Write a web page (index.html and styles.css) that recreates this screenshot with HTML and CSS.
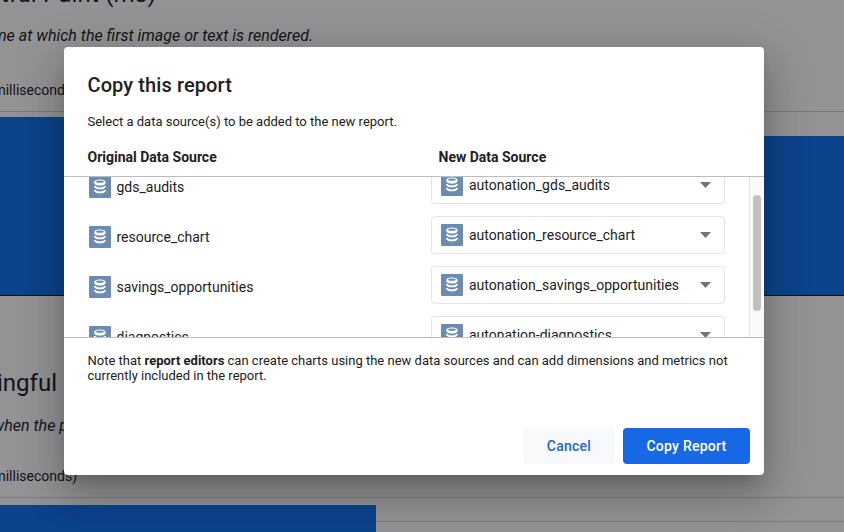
FILE: index.html
```html
<!DOCTYPE html>
<html lang="en">
<head>
<meta charset="utf-8">
<title>Copy this report</title>
<link rel="stylesheet" href="styles.css">
</head>
<body>
<svg class="defs" width="0" height="0" aria-hidden="true">
  <symbol id="db" viewBox="0 0 22 22">
    <rect width="22" height="22" rx="1" fill="#6b8bb1"/>
    <path d="M5.2 6c0-3.4 11.4-3.4 11.4 0v.8c0 3.8-11.4 3.8-11.4 0z" fill="#fff"/>
    <ellipse cx="10.9" cy="5.7" rx="3.9" ry="1.1" fill="#6b8bb1"/>
    <path d="M5.7 10c.8 3.2 9.6 3.2 10.4 0M5.7 14c.8 3.2 9.6 3.2 10.4 0" fill="none" stroke="#fff" stroke-width="1.9"/>
  </symbol>
</svg>
<main class="report">
  <section class="chart chart-first">
    <h2 class="chart-title"><span>First Contentful Paint (ms)</span></h2>
    <p class="chart-note"><span>The time at which the first image or text is rendered.</span></p>
    <div class="legend"><span>(milliseconds)</span></div>
    <div class="plot"><div class="bar bar-a"></div><div class="bar bar-b"></div></div>
  </section>
  <section class="chart chart-second">
    <h2 class="chart-title"><span>First Meaningful</span></h2>
    <p class="chart-note"><span>when the p</span></p>
    <div class="legend"><span>(milliseconds)</span></div>
    <div class="plot"><div class="bar bar-c"></div><div class="rest"></div></div>
  </section>
</main>
<div class="dialog" role="dialog">
  <h1>Copy this report</h1>
  <p class="intro">Select a data source(s) to be added to the new report.</p>
  <div class="heads"><div>Original Data Source</div><div>New Data Source</div></div>
  <div class="viewport">
    <div class="rows">
      <div class="row"><div class="source"><svg><use href="#db"/></svg><span>gds_audits</span></div><div class="select"><svg><use href="#db"/></svg><span>autonation_gds_audits</span><i class="caret"></i></div></div>
      <div class="row"><div class="source"><svg><use href="#db"/></svg><span>resource_chart</span></div><div class="select"><svg><use href="#db"/></svg><span>autonation_resource_chart</span><i class="caret"></i></div></div>
      <div class="row"><div class="source"><svg><use href="#db"/></svg><span>savings_opportunities</span></div><div class="select"><svg><use href="#db"/></svg><span>autonation_savings_opportunities</span><i class="caret"></i></div></div>
      <div class="row"><div class="source"><svg><use href="#db"/></svg><span>diagnostics</span></div><div class="select"><svg><use href="#db"/></svg><span>autonation-diagnostics</span><i class="caret"></i></div></div>
    </div>
    <div class="track"><div class="thumb"></div></div>
  </div>
  <p class="note">Note that <b>report editors</b> can create charts using the new data sources and can add dimensions and metrics not<br>currently included in the report.</p>
  <div class="actions"><button class="cancel">Cancel</button><button class="copy">Copy Report</button></div>
</div>
</body>
</html>
```
FILE: styles.css
```css
* { box-sizing: border-box; }
body {
  margin: 0;
  width: 844px;
  height: 532px;
  overflow: hidden;
  position: relative;
  background: #939395;
  color: #212124;
  font-family: Roboto, sans-serif;
}
h1, h2, p { margin: 0; font-weight: 400; }
.defs { display: block; }

/* Report behind the dialog */
.report { height: 532px; overflow: hidden; color: #131416; }
.chart { display: flex; flex-direction: column; }
.chart-title, .chart-note, .legend {
  display: flex;
  justify-content: flex-end;
  white-space: nowrap;
}
.chart-title { font-size: 24px; line-height: 28px; }
.chart-note { font-size: 16px; line-height: 20px; font-style: italic; }
.legend { font-size: 14px; line-height: 16px; width: 77px; }
.chart-first { height: 296px; }
.chart-first .chart-title { width: 156px; margin-top: -20px; letter-spacing: .2px; }
.chart-first .chart-note { width: 313px; margin-top: 18px; }
.chart-first .legend { margin-top: 36px; }
.chart-first .plot {
  margin-top: 13px;
  height: 185px;
  display: flex;
  align-items: flex-end;
  border-top: 1px solid #79797b;
  border-bottom: 1px solid #0d1520;
}
.bar { background: #0d438b; }
.bar-a { width: 420px; height: 178px; }
.bar-b { width: 424px; height: 159px; }
.chart-second .chart-title { width: 57px; margin-top: 73px; }
.chart-second .chart-note { width: 68px; margin-top: 19px; }
.chart-second .legend { margin-top: 32px; }
.chart-second .plot {
  margin-top: 13px;
  height: 35px;
  display: flex;
  align-items: flex-end;
  border-top: 1px solid #79797b;
}
.bar-c { width: 376px; height: 27px; }
.rest { flex: 1; height: 11px; border-top: 1px solid #79797b; }

/* Dialog */
.dialog {
  position: absolute;
  left: 64px;
  top: 47px;
  width: 700px;
  height: 428px;
  display: flex;
  flex-direction: column;
  background: #fff;
  border-radius: 4px;
  box-shadow: 0 11px 15px -7px rgba(0,0,0,.2), 0 24px 38px 3px rgba(0,0,0,.14), 0 9px 46px 8px rgba(0,0,0,.12);
}
h1 { margin: 26px 0 0 23.5px; font-size: 20px; line-height: 24px; font-weight: 500; letter-spacing: .1px; }
.intro { margin: 17px 0 0 23.5px; font-size: 13px; line-height: 15px; }
.heads {
  display: grid;
  grid-template-columns: 351px 1fr;
  margin: 20px 0 0 23.5px;
  font-size: 14px;
  line-height: 16px;
  font-weight: 700;
}
.viewport {
  margin-top: 11px;
  height: 162px;
  display: flex;
  overflow: hidden;
  border-top: 1px solid #bdbdbd;
  border-bottom: 1px solid #bdbdbd;
}
.rows {
  flex: 1;
  display: flex;
  flex-direction: column;
  gap: 12px;
  margin-top: -11px;
  padding: 0 24px 0 25px;
}
.row { flex: none; height: 38px; display: grid; grid-template-columns: 342px 294px; font-size: 14px; }
.source, .select { display: flex; align-items: center; }
.source { gap: 5.5px; padding-top: 3px; }
.select { gap: 6px; padding: 0 13px 0 9px; border: 1px solid #e3e4e6; border-radius: 4px; }
.row svg { width: 22px; height: 22px; flex: none; }
.select span { flex: 1; white-space: nowrap; }
.caret { width: 11px; height: 6px; background: #747474; clip-path: polygon(0 0, 100% 0, 50% 100%); }
.track { width: 15px; padding: 18px 3px 0; background: #f9f9f9; border-left: 1px solid #e5e5e5; }
.thumb { width: 8px; height: 116px; border-radius: 4px; background: #c1c1c1; }
.note { margin: 15px 0 0 23.5px; font-size: 13px; line-height: 15px; white-space: nowrap; }
.actions { display: flex; justify-content: flex-end; gap: 8px; margin: auto 14px 11px; }
button {
  height: 36px;
  padding: 0;
  border: 0;
  border-radius: 4px;
  font: 500 14px/36px Roboto, sans-serif;
  letter-spacing: .25px;
}
.cancel { width: 92px; background: #f8f9fb; color: #2465ce; }
.copy { width: 127px; background: #1768e4; color: #fff; }
```
